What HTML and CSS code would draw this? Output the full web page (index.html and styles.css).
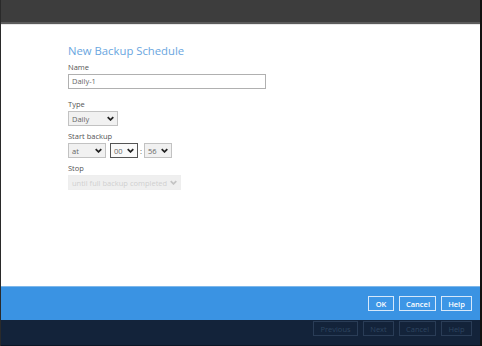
FILE: index.html
```html
<!DOCTYPE html>
<html lang="en">
<head>
    <meta charset="UTF-8">
    <title>New Backup Schedule</title>
    <link rel="stylesheet" href="styles.css">
</head>
<body>
    <div class="window">
        <div class="titlebar"></div>

        <div class="content">
            <h1 class="title">New Backup Schedule</h1>

            <div class="field field-name">
                <div class="label">Name</div>
                <div class="input">Daily-1</div>
            </div>

            <div class="field">
                <div class="label">Type</div>
                <div class="select w-type">
                    <span>Daily</span>
                    <svg class="chev" viewBox="0 0 10 6"><path d="M1 1 L5 5 L9 1"/></svg>
                </div>
            </div>

            <div class="field">
                <div class="label">Start backup</div>
                <div class="row">
                    <div class="select w-at">
                        <span>at</span>
                        <svg class="chev" viewBox="0 0 10 6"><path d="M1 1 L5 5 L9 1"/></svg>
                    </div>
                    <div class="select w-num focus">
                        <span>00</span>
                        <svg class="chev" viewBox="0 0 10 6"><path d="M1 1 L5 5 L9 1"/></svg>
                    </div>
                    <span class="colon">:</span>
                    <div class="select w-num">
                        <span>56</span>
                        <svg class="chev" viewBox="0 0 10 6"><path d="M1 1 L5 5 L9 1"/></svg>
                    </div>
                </div>
            </div>

            <div class="field">
                <div class="label">Stop</div>
                <div class="select w-stop disabled">
                    <span>until full backup completed</span>
                    <svg class="chev" viewBox="0 0 10 6"><path d="M1 1 L5 5 L9 1"/></svg>
                </div>
            </div>
        </div>

        <div class="dialog-bar">
            <button class="btn">OK</button>
            <button class="btn">Cancel</button>
            <button class="btn">Help</button>
        </div>

        <div class="wizard-bar">
            <button class="btn ghost w-prev">Previous</button>
            <button class="btn ghost w-next">Next</button>
            <button class="btn ghost">Cancel</button>
            <button class="btn ghost">Help</button>
        </div>
    </div>
</body>
</html>
```

FILE: styles.css
```css
:root {
    --title-blue: #6aa6e0;
    --bar-blue: #3a93e3;
    --navy: #13233a;
    --text-color: #555;
}

html, body {
    margin: 0;
    padding: 0;
    height: 100%;
}

body {
    font-family: 'Open Sans', 'Noto Sans', sans-serif;
    background-color: #111;
    color: var(--text-color);
}

.window {
    display: flex;
    flex-direction: column;
    height: 346px;
    width: 482px;
    box-sizing: border-box;
    border-left: 1px solid #2a2a2a;
    border-right: 2px solid #111;
}

.titlebar {
    height: 22px;
    background-color: #3d3d3d;
    border-bottom: 2px solid #5c5c5c;
    flex: none;
}

.content {
    flex: 1;
    min-height: 0;
    background-color: #fff;
    padding: 17px 0 0 67px;
    border-top: 1px solid #e8e8e8;
}

.title {
    margin: 0 0 2px;
    font-size: 11.3px;
    font-weight: 400;
    color: var(--title-blue);
    line-height: 18px;
}

.field {
    margin-bottom: 5px;
}

.field-name {
    margin-bottom: 10px;
}

.label {
    font-size: 7.5px;
    line-height: 11px;
    color: #555;
    margin-bottom: 1px;
}

.input {
    width: 193px;
    height: 13px;
    border: 1px solid #b0b0b0;
    font-size: 7.5px;
    line-height: 13px;
    padding-left: 3px;
    color: #666;
}

.row {
    display: flex;
    align-items: center;
    gap: 4px;
}

.select {
    display: flex;
    align-items: center;
    justify-content: space-between;
    height: 15px;
    box-sizing: border-box;
    border: 1px solid #c2c2c2;
    background-color: #f1f1f1;
    padding: 0 3px 0 3px;
    font-size: 7.5px;
    color: #666;
}

.select.focus {
    border-color: #555;
    background-color: #fafafa;
}

.select.disabled {
    border-color: #eeeeee;
    background-color: #efefef;
    color: #d0d0d0;
}

.chev {
    width: 7px;
    height: 5px;
    fill: none;
    stroke: #222;
    stroke-width: 2.4;
}

.disabled .chev {
    stroke: #c4c4c4;
}

.w-type { width: 50px; }
.w-at { width: 38px; }
.w-num { width: 28px; }
.w-stop { width: 113px; }

.colon {
    font-size: 7.5px;
    margin: 0 -2px;
}

.dialog-bar {
    height: 34px;
    flex: none;
    background-color: var(--bar-blue);
    border-top: 1px solid #7db7ea;
    box-sizing: border-box;
    display: flex;
    justify-content: flex-end;
    align-items: center;
    gap: 5px;
    padding: 0 8px 0 0;
}

.wizard-bar {
    height: 26px;
    flex: none;
    box-sizing: border-box;
    background-color: var(--navy);
    display: flex;
    justify-content: flex-end;
    align-items: flex-start;
    gap: 5px;
    padding: 1px 8px 0 0;
    border-bottom: 1px solid #0b1626;
}

.btn {
    font-family: inherit;
    height: 15px;
    min-width: 26px;
    padding: 0 6px;
    border: 1px solid #d6e8fa;
    background-color: #3d96e6;
    color: #fff;
    font-size: 7.5px;
    font-weight: 600;
    line-height: 12px;
}

.dialog-bar .btn:nth-child(2) { width: 37px; }
.dialog-bar .btn:nth-child(3) { width: 31px; }

.btn.ghost {
    background-color: transparent;
    border-color: #2a3d57;
    color: #2e4560;
    font-weight: 400;
}

.wizard-bar .btn:nth-child(3) { width: 37px; }
.wizard-bar .btn:nth-child(4) { width: 31px; }

.w-prev { width: 45px; }
.w-next { width: 31px; }
```
